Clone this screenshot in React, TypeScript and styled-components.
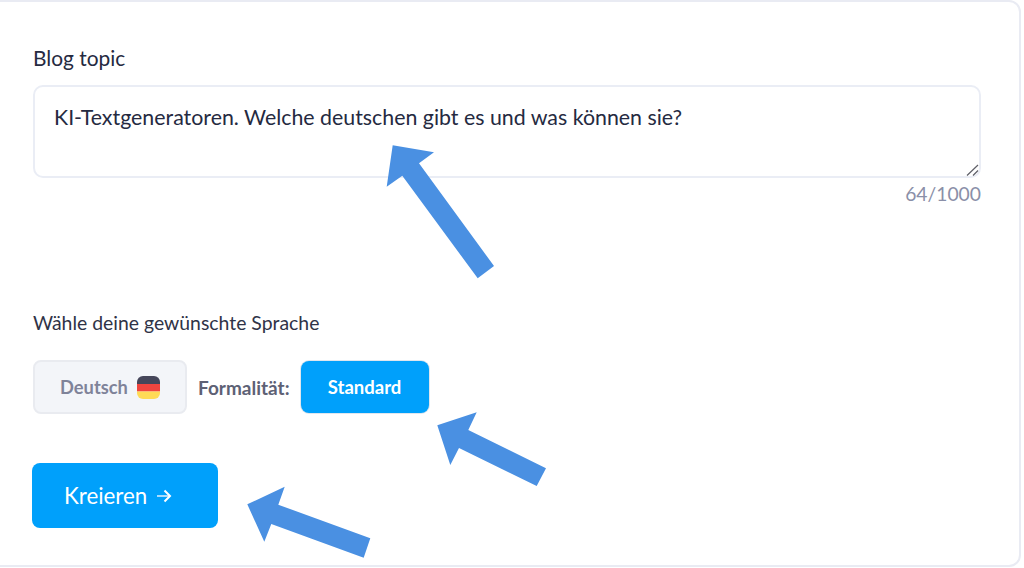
import styled, { createGlobalStyle } from 'styled-components';

const GlobalStyle = createGlobalStyle`
  html, body {
    margin: 0;
    padding: 0;
    background: #fff;
    overflow: hidden;
  }
  body {
    font-family: Lato, 'Liberation Sans', sans-serif;
  }
`;

const TOPIC = 'KI-Textgeneratoren. Welche deutschen gibt es und was können sie?';

const ARROWS = [
  '392.7,145.3 434,152.3 419,163.3 494,266 477.7,278.3 402.3,175.7 386.7,186.7',
  '437.3,425.3 476.7,412.3 468.3,430 546,468.3 536.7,486 459,448 450.3,465',
  '247.3,504.3 284.7,486.7 278.3,504.7 370.3,538.3 363.7,557.7 271.3,524 264.3,541.7',
];

const GermanFlag = () => (
  <FlagIcon width='23' height='23' viewBox='0 0 23 23'>
    <clipPath id='flag-clip'>
      <rect width='23' height='23' rx='6' />
    </clipPath>
    <g clipPath='url(#flag-clip)'>
      <rect width='23' height='8' fill='#45465a' />
      <rect y='8' width='23' height='7.5' fill='#f0453f' />
      <rect y='15.5' width='23' height='7.5' fill='#ffdb57' />
    </g>
  </FlagIcon>
);

export default function App() {
  return (
    <>
      <GlobalStyle />
      <StyledPage>
        <StyledCard>
          <StyledLabel>Blog topic</StyledLabel>
          <StyledField>
            <StyledTextarea readOnly value={TOPIC} />
            <StyledGrip width='13' height='12' viewBox='0 0 13 12'>
              <path d='M1 11.500 12 1M7 11.500l5-5' stroke='#5f6068' strokeWidth='1.2' fill='none' />
            </StyledGrip>
          </StyledField>
          <StyledCounter>64/1000</StyledCounter>
          <StyledHint>Wähle deine gewünschte Sprache</StyledHint>
          <StyledOptions>
            <StyledLanguage>
              Deutsch
              <GermanFlag />
            </StyledLanguage>
            <StyledFormality>Formalität:</StyledFormality>
            <StyledStandard>Standard</StyledStandard>
          </StyledOptions>
          <StyledCreate>
            Kreieren
            <svg width='16' height='14' viewBox='0 0 16 14' fill='none'>
              <path d='M1 7h12' stroke='#a9dcfd' strokeWidth='2' />
              <path d='M8.500 1.500 14 7l-5.500 5.500' stroke='#fff' strokeWidth='2' />
            </svg>
          </StyledCreate>
        </StyledCard>
        <StyledOverlay viewBox='0 0 1024 568'>
          {ARROWS.map((points) => (
            <polygon key={points} points={points} fill='#4a90e2' />
          ))}
        </StyledOverlay>
      </StyledPage>
    </>
  );
}

const StyledPage = styled.div`
  position: relative;
  width: 1024px;
  height: 568px;
  overflow: hidden;
  background: #fff;
`;

const StyledCard = styled.div`
  box-sizing: border-box;
  width: 1035px;
  height: 567px;
  margin-left: -14px;
  padding: 44px 40px 0 45px;
  background: #fff;
  border: 2px solid #e9ebf3;
  border-radius: 12px;
`;

const StyledLabel = styled.div`
  font-size: 20.900px;
  line-height: 24px;
  color: #252a41;
`;

const StyledField = styled.div`
  position: relative;
  width: 948px;
  height: 93px;
  margin-top: 15px;
`;

const StyledTextarea = styled.textarea`
  display: block;
  box-sizing: border-box;
  width: 100%;
  height: 100%;
  margin: 0;
  padding: 16px 19px;
  font-family: Lato, 'Liberation Sans', sans-serif;
  font-size: 21.350px;
  line-height: 28px;
  color: #252a41;
  background: #fff;
  border: 2px solid #eaedf5;
  border-radius: 10px;
  outline: none;
  resize: none;
`;

const StyledGrip = styled.svg`
  position: absolute;
  right: 2px;
  bottom: 2px;
`;

const StyledCounter = styled.div`
  width: 948px;
  margin-top: 5px;
  text-align: right;
  font-size: 19.300px;
  line-height: 22px;
  color: #8a8fa8;
`;

const StyledHint = styled.div`
  margin-top: 107px;
  font-size: 19.400px;
  line-height: 22px;
  color: #2f3347;
`;

const StyledOptions = styled.div`
  display: flex;
  align-items: center;
  margin-top: 26px;
`;

const StyledLanguage = styled.div`
  box-sizing: border-box;
  display: flex;
  align-items: center;
  justify-content: center;
  gap: 9px;
  width: 154px;
  height: 54px;
  font-size: 18.300px;
  font-weight: 700;
  color: #7f8399;
  background: #f3f5f9;
  border: 2px solid #e9ebf0;
  border-radius: 8px;
`;

const FlagIcon = styled.svg`
  display: block;
`;

const StyledFormality = styled.span`
  margin: 0 11px;
  font-size: 19px;
  font-weight: 700;
  color: #5d6175;
`;

const StyledStandard = styled.div`
  display: flex;
  align-items: center;
  justify-content: center;
  width: 128px;
  height: 52px;
  font-size: 18.500px;
  font-weight: 700;
  color: #fff;
  background: #00a0fb;
  border-radius: 8px;
  box-shadow: 0 0 0 1px #dfe6ee;
`;

const StyledCreate = styled.div`
  display: flex;
  align-items: center;
  gap: 9px;
  box-sizing: border-box;
  width: 186px;
  height: 65px;
  margin: 49px 0 0 -1px;
  padding-left: 32px;
  font-size: 22.300px;
  color: #fff;
  background: #00a0fb;
  border-radius: 8px;
`;

const StyledOverlay = styled.svg`
  position: absolute;
  top: 0;
  left: 0;
  width: 1024px;
  height: 568px;
  pointer-events: none;
`;
